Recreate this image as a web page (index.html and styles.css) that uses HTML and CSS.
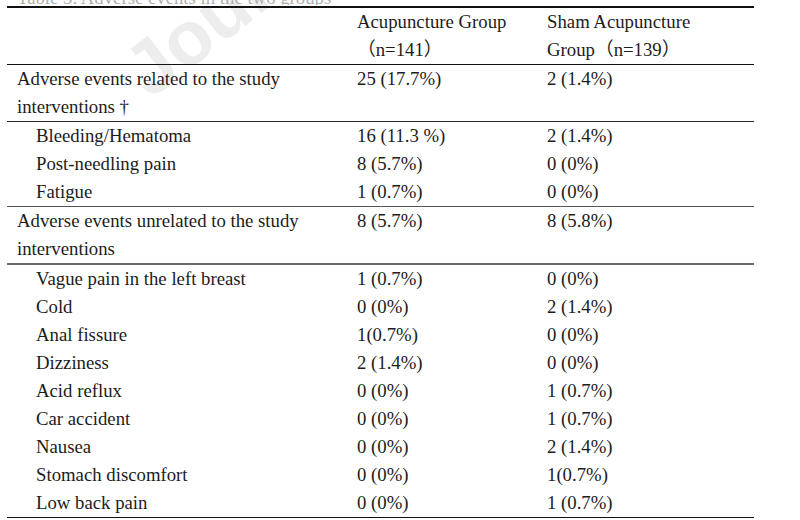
FILE: index.html
```html
<!DOCTYPE html>
<html lang="en">
<head>
<meta charset="utf-8">
<title>Adverse events</title>
<link rel="stylesheet" href="styles.css">
</head>
<body>
<div class="page">
  <div class="watermark">Journal Pre-proof</div>
  <div class="caption"><span>Table 3. Adverse events in the two groups</span></div>
  <table class="ae">
    <colgroup>
      <col class="c1"><col class="c2"><col class="c3">
    </colgroup>
    <thead>
      <tr class="head">
        <th></th>
        <th>Acupuncture Group<br>（n=141）</th>
        <th>Sham Acupuncture<br>Group（n=139）</th>
      </tr>
    </thead>
    <tbody class="grp g1">
      <tr><td>Adverse events related to the study<br>interventions †</td><td>25 (17.7%)</td><td>2 (1.4%)</td></tr>
    </tbody>
    <tbody class="grp g2">
      <tr><td class="sub">Bleeding/Hematoma</td><td>16 (11.3 %)</td><td>2 (1.4%)</td></tr>
      <tr><td class="sub">Post-needling pain</td><td>8 (5.7%)</td><td>0 (0%)</td></tr>
      <tr><td class="sub">Fatigue</td><td>1 (0.7%)</td><td>0 (0%)</td></tr>
    </tbody>
    <tbody class="grp g3">
      <tr><td>Adverse events unrelated to the study<br>interventions</td><td>8 (5.7%)</td><td>8 (5.8%)</td></tr>
    </tbody>
    <tbody class="grp g4">
      <tr><td class="sub">Vague pain in the left breast</td><td>1 (0.7%)</td><td>0 (0%)</td></tr>
      <tr><td class="sub">Cold</td><td>0 (0%)</td><td>2 (1.4%)</td></tr>
      <tr><td class="sub">Anal fissure</td><td>1(0.7%)</td><td>0 (0%)</td></tr>
      <tr><td class="sub">Dizziness</td><td>2 (1.4%)</td><td>0 (0%)</td></tr>
      <tr><td class="sub">Acid reflux</td><td>0 (0%)</td><td>1 (0.7%)</td></tr>
      <tr><td class="sub">Car accident</td><td>0 (0%)</td><td>1 (0.7%)</td></tr>
      <tr><td class="sub">Nausea</td><td>0 (0%)</td><td>2 (1.4%)</td></tr>
      <tr><td class="sub">Stomach discomfort</td><td>0 (0%)</td><td>1(0.7%)</td></tr>
      <tr><td class="sub">Low back pain</td><td>0 (0%)</td><td>1 (0.7%)</td></tr>
    </tbody>
  </table>
</div>
</body>
</html>
```

FILE: styles.css
```css
html, body {
  margin: 0;
  padding: 0;
  background: #ffffff;
}

.page {
  position: relative;
  width: 800px;
  height: 520px;
  overflow: hidden;
  padding: 0 0 0 7px;
  box-sizing: border-box;
  font-family: "Liberation Serif", "Noto Sans CJK SC", serif;
  font-size: 18.75px;
  color: #1c1c1c;
}

.watermark {
  position: absolute;
  left: 150px;
  top: 38px;
  font-family: "Liberation Sans", sans-serif;
  font-weight: bold;
  font-size: 76px;
  line-height: 72px;
  color: #ededed;
  white-space: nowrap;
  transform-origin: 0 61px;
  transform: rotate(-38deg);
  z-index: 0;
  pointer-events: none;
}

.caption {
  position: relative;
  height: 5px;
  margin-bottom: 1px;
  overflow: hidden;
  display: flex;
  align-items: flex-end;
  padding-left: 10px;
  color: #b0b0b0;
  line-height: 14px;
}

.caption span {
  white-space: nowrap;
}

.ae {
  position: relative;
  z-index: 1;
  width: 747px;
  border-collapse: collapse;
  table-layout: fixed;
  line-height: 28px;
}

.c1 { width: 340px; }
.c2 { width: 190px; }
.c3 { width: 217px; }

.ae th,
.ae td {
  padding: 0 0 0 10px;
  text-align: left;
  vertical-align: top;
  font-weight: normal;
  white-space: nowrap;
}

.ae td.sub {
  padding-left: 29px;
}

.ae thead tr.head {
  border-top: 2px solid #111111;
  border-bottom: 1px solid #111111;
}

.g1 {
  border-bottom: 1px solid #2a2a2a;
}

.g2 {
  border-bottom: 1px solid #555555;
}

.g3 {
  border-bottom: 2px solid #6a6a6a;
}

.g4 {
  border-bottom: 1px solid #111111;
}
```
